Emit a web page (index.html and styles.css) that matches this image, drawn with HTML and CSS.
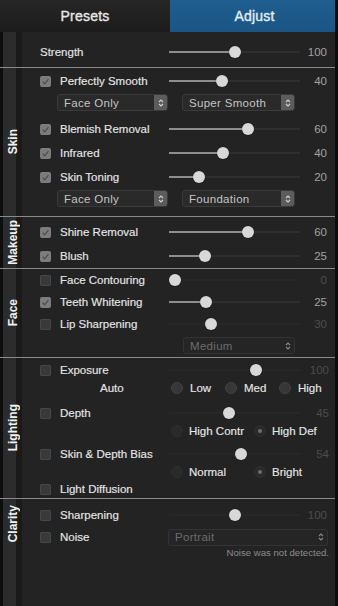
FILE: index.html
```html
<!DOCTYPE html>
<html lang="en">

<head>
  <meta charset="utf-8">
  <title>Adjust</title>
  <link rel="stylesheet" href="styles.css">
</head>

<body>
  <div class="app">
    <div class="tabs">
      <div class="tab">Presets</div>
      <div class="tab active">Adjust</div>
    </div>

    <div class="panel">
      <!-- strength -->
      <section class="group strength">
        <div class="side"></div>
        <div class="rows">
          <div class="row">
            <span class="label wide">Strength</span>
            <div class="slider" style="--p:.504"><span class="thumb"></span></div>
            <span class="val">100</span>
          </div>
        </div>
      </section>

      <!-- skin -->
      <section class="group skin">
        <div class="side"><span>Skin</span></div>
        <div class="rows">
          <div class="row">
            <span class="box on"><svg viewBox="0 0 12 12"><path d="M3 6.3l2.1 2.3L9.2 3.4"/></svg></span>
            <span class="label">Perfectly Smooth</span>
            <div class="slider" style="--p:.395"><span class="thumb"></span></div>
            <span class="val">40</span>
          </div>
          <div class="pickers">
            <div class="pick first"><span>Face Only</span><i class="btn"><svg viewBox="0 0 8 12"><path d="M2 5L4 3L6 5M2 7L4 9L6 7"/></svg></i></div>
            <div class="pick second"><span>Super Smooth</span><i class="btn"><svg viewBox="0 0 8 12"><path d="M2 5L4 3L6 5M2 7L4 9L6 7"/></svg></i></div>
          </div>
          <div class="row">
            <span class="box on"><svg viewBox="0 0 12 12"><path d="M3 6.3l2.1 2.3L9.2 3.4"/></svg></span>
            <span class="label">Blemish Removal</span>
            <div class="slider" style="--p:.613"><span class="thumb"></span></div>
            <span class="val">60</span>
          </div>
          <div class="row">
            <span class="box on"><svg viewBox="0 0 12 12"><path d="M3 6.3l2.1 2.3L9.2 3.4"/></svg></span>
            <span class="label">Infrared</span>
            <div class="slider" style="--p:.403"><span class="thumb"></span></div>
            <span class="val">40</span>
          </div>
          <div class="row">
            <span class="box on"><svg viewBox="0 0 12 12"><path d="M3 6.3l2.1 2.3L9.2 3.4"/></svg></span>
            <span class="label">Skin Toning</span>
            <div class="slider" style="--p:.202"><span class="thumb"></span></div>
            <span class="val">20</span>
          </div>
          <div class="pickers">
            <div class="pick first"><span>Face Only</span><i class="btn"><svg viewBox="0 0 8 12"><path d="M2 5L4 3L6 5M2 7L4 9L6 7"/></svg></i></div>
            <div class="pick second"><span>Foundation</span><i class="btn"><svg viewBox="0 0 8 12"><path d="M2 5L4 3L6 5M2 7L4 9L6 7"/></svg></i></div>
          </div>
        </div>
      </section>

      <!-- makeup -->
      <section class="group makeup">
        <div class="side"><span>Makeup</span></div>
        <div class="rows">
          <div class="row">
            <span class="box on"><svg viewBox="0 0 12 12"><path d="M3 6.3l2.1 2.3L9.2 3.4"/></svg></span>
            <span class="label">Shine Removal</span>
            <div class="slider" style="--p:.613"><span class="thumb"></span></div>
            <span class="val">60</span>
          </div>
          <div class="row">
            <span class="box on"><svg viewBox="0 0 12 12"><path d="M3 6.3l2.1 2.3L9.2 3.4"/></svg></span>
            <span class="label">Blush</span>
            <div class="slider" style="--p:.252"><span class="thumb"></span></div>
            <span class="val">25</span>
          </div>
        </div>
      </section>

      <!-- face -->
      <section class="group face">
        <div class="side"><span>Face</span></div>
        <div class="rows">
          <div class="row">
            <span class="box"></span>
            <span class="label">Face Contouring</span>
            <div class="slider off" style="--p:0"><span class="thumb"></span></div>
            <span class="val dim">0</span>
          </div>
          <div class="row">
            <span class="box on"><svg viewBox="0 0 12 12"><path d="M3 6.3l2.1 2.3L9.2 3.4"/></svg></span>
            <span class="label">Teeth Whitening</span>
            <div class="slider" style="--p:.26"><span class="thumb"></span></div>
            <span class="val">25</span>
          </div>
          <div class="row">
            <span class="box"></span>
            <span class="label">Lip Sharpening</span>
            <div class="slider off" style="--p:.303"><span class="thumb"></span></div>
            <span class="val dim">30</span>
          </div>
          <div class="pickers medium">
            <div class="pick plain"><span>Medium</span><i class="btn"><svg viewBox="0 0 8 12"><path d="M2 5L4 3L6 5M2 7L4 9L6 7"/></svg></i></div>
          </div>
        </div>
      </section>

      <!-- lighting -->
      <section class="group lighting">
        <div class="side"><span>Lighting</span></div>
        <div class="rows">
          <div class="row">
            <span class="box"></span>
            <span class="label">Exposure</span>
            <div class="slider off" style="--p:.68"><span class="thumb"></span></div>
            <span class="val dim">100</span>
          </div>
          <div class="radios auto">
            <span class="auto-label">Auto</span>
            <div class="opts">
              <span class="opt"><i class="radio"></i>Low</span>
              <span class="opt"><i class="radio"></i>Med</span>
              <span class="opt"><i class="radio"></i>High</span>
            </div>
          </div>
          <div class="row depth">
            <span class="box"></span>
            <span class="label">Depth</span>
            <div class="slider off" style="--p:.454"><span class="thumb"></span></div>
            <span class="val dim">45</span>
          </div>
          <div class="radios">
            <span></span>
            <div class="opts wide">
              <span class="opt"><i class="radio dim"></i>High Contr</span>
              <span class="opt"><i class="radio dim sel"></i>High Def</span>
            </div>
          </div>
          <div class="row bias">
            <span class="box"></span>
            <span class="label">Skin &amp; Depth Bias</span>
            <div class="slider off" style="--p:.555"><span class="thumb"></span></div>
            <span class="val dim">54</span>
          </div>
          <div class="radios">
            <span></span>
            <div class="opts wide">
              <span class="opt"><i class="radio dim"></i>Normal</span>
              <span class="opt"><i class="radio dim sel"></i>Bright</span>
            </div>
          </div>
          <div class="row diffusion">
            <span class="box"></span>
            <span class="label">Light Diffusion</span>
          </div>
        </div>
      </section>

      <!-- clarity -->
      <section class="group clarity">
        <div class="side"><span>Clarity</span></div>
        <div class="rows">
          <div class="row">
            <span class="box"></span>
            <span class="label">Sharpening</span>
            <div class="slider off" style="--p:.504"><span class="thumb"></span></div>
            <span class="val dim">100</span>
          </div>
          <div class="row">
            <span class="box"></span>
            <span class="label">Noise</span>
            <div class="pick plain portrait"><span>Portrait</span><i class="btn"><svg viewBox="0 0 8 12"><path d="M2 5L4 3L6 5M2 7L4 9L6 7"/></svg></i></div>
          </div>
          <div class="note">Noise was not detected.</div>
        </div>
      </section>
    </div>
  </div>
</body>

</html>
```

FILE: styles.css
```css
body {
  margin: 0;
  background-color: #0c0c0c;
  font-family: 'Liberation Sans', Arial, sans-serif;
  color: #e4e4e4;
}

.app {
  width: 338px;
  height: 606px;
  display: flex;
  flex-direction: column;
  padding-right: 3px;
  box-sizing: border-box;
  background-color: #0c0c0c;
}

/* tabs */
.tabs {
  display: flex;
  height: 32px;
  flex-shrink: 0;
}

.tab {
  width: 170px;
  display: flex;
  align-items: center;
  justify-content: center;
  font-size: 14px;
  color: #e8e8e8;
  background: linear-gradient(#262626, #1c1c1c);
  letter-spacing: 0.2px;
  -webkit-text-stroke: 0.35px;
}

.tab.active {
  flex: 1;
  background: linear-gradient(#1f5e8f, #1a5585);
  color: #e6eef5;
  padding-left: 4px;
}

/* panel */
.panel {
  flex: 1;
  display: flex;
  flex-direction: column;
  background-color: #232323;
}

.group {
  display: flex;
  border-bottom: 1px solid #8a8a8a;
}

.group.clarity {
  flex: 1;
  border-bottom: none;
}

.side {
  width: 22px;
  flex-shrink: 0;
  display: flex;
  align-items: center;
  justify-content: center;
  background: linear-gradient(to right, #0e0e0e 0 3px, #2c2c2c 3px 16px, #1a1a1a 16px 22px);
}

.side span {
  writing-mode: vertical-rl;
  transform: rotate(180deg);
  font-size: 12px;
  font-weight: bold;
  color: #f2f2f2;
  margin-left: 4px;
}

.clarity .side {
  align-items: flex-start;
  padding-top: 6px;
}

.rows {
  flex: 1;
  display: flex;
  flex-direction: column;
}

.strength .rows { padding: 8px 0 3px; }
.skin .rows { padding: 1px 0 8px; }
.makeup .rows { padding: 3px 0 0; }
.face .rows { padding: 0 0 1px; }
.lighting .rows { padding: 1px 0 0; }
.clarity .rows { padding: 5px 0 0; }

/* rows */
.row {
  display: grid;
  grid-template-columns: 20px 109px 131px 1fr;
  align-items: center;
  height: 24px;
  padding: 0 8px 0 18px;
}

.face .row,
.lighting .row,
.clarity .row {
  height: 22px;
}

.lighting .depth { margin-top: 7px; }
.lighting .bias { margin-top: 5px; }
.lighting .diffusion { height: 18px; margin-top: 1px; }

.label {
  font-size: 11.5px;
  color: #e6e6e6;
  white-space: nowrap;
  -webkit-text-stroke: 0.15px;
}

.label.wide {
  grid-column: 1 / 3;
}

.val {
  text-align: right;
  font-size: 11.5px;
  color: #a2a2a2;
}

.val.dim {
  color: #4c4c4c;
}

/* checkbox */
.box {
  width: 11px;
  height: 11px;
  border-radius: 2px;
  background-color: #393939;
  box-shadow: inset 0 0 0 1px #474747;
  display: flex;
}

.box.on {
  background-color: #7c7c7c;
  box-shadow: none;
}

.box svg {
  width: 11px;
  height: 11px;
  fill: none;
  stroke: #4e4e4e;
  stroke-width: 1.4;
}

/* slider */
.slider {
  position: relative;
  height: 2px;
  background-color: #2e2e2e;
}

.slider::before {
  content: '';
  position: absolute;
  left: 0;
  top: 0;
  height: 2px;
  width: calc((100% - 12px) * var(--p) + 6px);
  background-color: #8e8e8e;
}

.slider.off,
.slider.off::before {
  background-color: #272727;
}

.thumb {
  position: absolute;
  top: -5px;
  left: calc((100% - 12px) * var(--p));
  width: 12px;
  height: 12px;
  border-radius: 50%;
  background-color: #d8d8d8;
  box-shadow: 0 0 1px rgba(0, 0, 0, 0.6);
}

/* dropdowns */
.pickers {
  display: flex;
  align-items: center;
  gap: 14px;
  height: 19px;
  padding-left: 35px;
  margin-bottom: 5px;
}

.skin .pickers:last-child {
  margin-bottom: 0;
}

.pickers.medium {
  height: 21px;
  padding-left: 161px;
  margin-bottom: 0;
}

.pick {
  height: 17px;
  box-sizing: border-box;
  display: flex;
  align-items: center;
  justify-content: space-between;
  border: 1px solid #3a3a3a;
  border-radius: 3px;
  background-color: #2a2a2a;
  font-size: 11.5px;
  color: #c4c4c4;
  letter-spacing: 0.3px;
}

.pick span {
  padding-left: 6px;
}

.pick.first { width: 111px; }
.pick.second { width: 113px; }

.btn {
  width: 13px;
  height: 15px;
  display: flex;
  align-items: center;
  justify-content: center;
  background-color: #5c5c5c;
  border-radius: 0 2px 2px 0;
}

.btn svg {
  width: 8px;
  height: 12px;
  fill: none;
  stroke: #cfcfcf;
  stroke-width: 1.1;
}

.pick.plain {
  width: 112px;
  background-color: #252525;
  border-color: #333;
  color: #6c6c6c;
}

.pick.plain .btn {
  background: none;
}

.pick.plain .btn svg {
  stroke: #8a8a8a;
}

.pick.portrait {
  grid-column: 3 / 5;
  width: auto;
  margin-right: -1px;
  margin-left: -1px;
}

/* radios */
.radios {
  display: grid;
  grid-template-columns: 129px 1fr;
  align-items: center;
  height: 14px;
  padding-left: 18px;
}

.auto-label {
  font-size: 11.5px;
  color: #e6e6e6;
  padding-left: 60px;
  -webkit-text-stroke: 0.15px;
}

.opts {
  display: flex;
  padding-left: 2px;
}

.opt {
  display: flex;
  align-items: center;
  gap: 7px;
  width: 54px;
  font-size: 11.5px;
  color: #e6e6e6;
  white-space: nowrap;
  -webkit-text-stroke: 0.15px;
}

.opts.wide .opt {
  width: 83px;
  gap: 6px;
}

.radio {
  width: 12px;
  height: 12px;
  border-radius: 50%;
  box-sizing: border-box;
  background-color: #373737;
  border: 1px solid #424242;
  display: flex;
  align-items: center;
  justify-content: center;
}

.radio.dim {
  background-color: #2a2a2a;
  border-color: #2f2f2f;
}

.radio.sel::after {
  content: '';
  width: 4px;
  height: 4px;
  border-radius: 50%;
  background-color: #6e6e6e;
}

.note {
  text-align: right;
  font-size: 9.6px;
  color: #8c8c8c;
  padding-right: 6px;
  height: 10px;
  line-height: 10px;
}
```
